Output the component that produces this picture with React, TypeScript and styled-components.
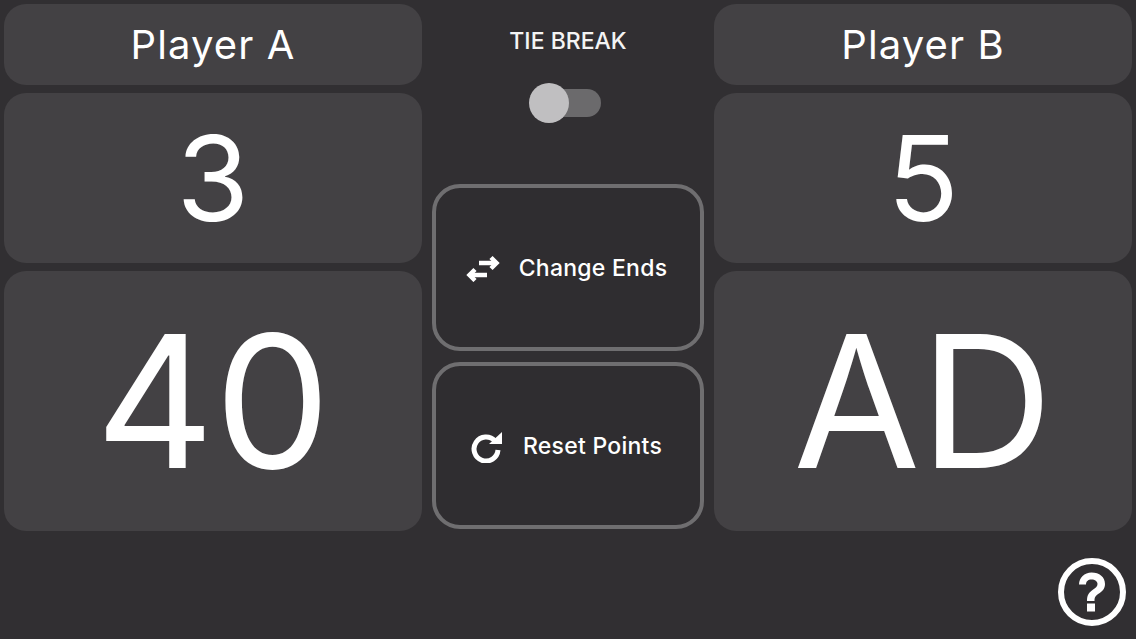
import * as React from 'react';
import styled, {createGlobalStyle} from 'styled-components';

const GlobalStyle = createGlobalStyle`
    html, body {
        margin: 0;
        padding: 0;
        background: #312f32;
    }
`;

const Screen = styled.div`
    box-sizing: border-box;
    width: 1136px;
    height: 639px;
    padding: 4px 4px 0;
    background: #312f32;
    color: #fff;
    font-family: Inter, "Liberation Sans", sans-serif;
    display: flex;
    flex-direction: column;
`;

const Board = styled.div`
    display: grid;
    grid-template-columns: 418px 1fr 418px;
    column-gap: 10px;
`;

const PlayerColumn = styled.div`
    display: grid;
    grid-template-rows: 81px 170px 260px;
    row-gap: 8px;
`;

const Card = styled.div<{$size: number; $spacing?: number}>`
    display: flex;
    align-items: center;
    justify-content: center;
    background: #434144;
    border-radius: 22px;
    font-size: ${props => props.$size}px;
    letter-spacing: ${props => props.$spacing || 0}px;
    line-height: 1;
`;

const Middle = styled.div`
    display: flex;
    flex-direction: column;
    align-items: stretch;
`;

const TieBreak = styled.div`
    display: flex;
    flex-direction: column;
    align-items: center;
    height: 180px;
    padding-top: 24px;
    box-sizing: border-box;
`;

const TieLabel = styled.div`
    font-size: 23px;
    font-weight: 500;
    line-height: 26px;
    color: #f4f4f4;
`;

const SwitchTrack = styled.div`
    position: relative;
    width: 62px;
    height: 28px;
    margin: 35px 0 0 4px;
    border-radius: 14px;
    background: #6b6a6c;
`;

const SwitchKnob = styled.div`
    position: absolute;
    left: -10px;
    top: -6px;
    width: 40px;
    height: 40px;
    border-radius: 50%;
    background: #c0bfc1;
`;

const ActionButton = styled.div<{$gap: number}>`
    box-sizing: border-box;
    height: 167px;
    margin-bottom: 11px;
    padding-right: 3px;
    display: flex;
    align-items: center;
    justify-content: center;
    gap: ${props => props.$gap}px;
    border: 4px solid #6f6e70;
    border-radius: 28px;
    background: #2f2d30;
    font-size: 23px;
    font-weight: 500;
    letter-spacing: 0.25px;
`;

const ResetGlyph = styled.svg`
    margin-top: 3px;
`;

const Footer = styled.div`
    display: flex;
    justify-content: flex-end;
    padding: 17px 5px 0 0;
`;

const SwapIcon = () => (
    <svg width="34" height="28" viewBox="0 0 34 28" fill="none" stroke="#fff" strokeWidth="4.500">
        <path d="M13 9H30" />
        <path d="M25 3.500L30.500 9L25 14.500" />
        <path d="M21 21H4" />
        <path d="M9 15.500L3.500 21L9 26.500" />
    </svg>
);

const ResetIcon = () => (
    <ResetGlyph width="32" height="32" viewBox="0 0 32 32">
        <path d="M24 10A12 12 0 1 0 27 19" fill="none" stroke="#fff" strokeWidth="5" />
        <path d="M31 1V13H18z" fill="#fff" />
    </ResetGlyph>
);

const HelpIcon = () => (
    <svg width="70" height="70" viewBox="0 0 70 70">
        <circle cx="35" cy="35" r="31" fill="none" stroke="#fff" strokeWidth="6" />
        <path
            d="M22 27.500c0-7 5.500-12 12.500-12 8 0 13.500 4.500 13.500 11.500 0 5-3 7.500-6.500 9.800-3 2-4 3.500-4 7.200h-7.500c0-6 2-8.500 5.500-11 3-2 5-3.300 5-6 0-2.700-2.500-4.500-6-4.500-3.500 0-5.500 2-5.500 5z"
            fill="#fff"
        />
        <rect x="30" y="46.500" width="8" height="8" fill="#fff" />
    </svg>
);

const Player: React.FC<{name: string; games: string; points: string}> = ({name, games, points}) => (
    <PlayerColumn>
        <Card $size={40} $spacing={1.1}>{name}</Card>
        <Card $size={118}>{games}</Card>
        <Card $size={184}>{points}</Card>
    </PlayerColumn>
);

const App: React.FC = () => (
    <Screen>
        <GlobalStyle />
        <Board>
            <Player name="Player A" games="3" points="40" />
            <Middle>
                <TieBreak>
                    <TieLabel>TIE BREAK</TieLabel>
                    <SwitchTrack>
                        <SwitchKnob />
                    </SwitchTrack>
                </TieBreak>
                <ActionButton $gap={19}>
                    <SwapIcon />
                    Change Ends
                </ActionButton>
                <ActionButton $gap={20}>
                    <ResetIcon />
                    Reset Points
                </ActionButton>
            </Middle>
            <Player name="Player B" games="5" points="AD" />
        </Board>
        <Footer>
            <HelpIcon />
        </Footer>
    </Screen>
);

export default App;
